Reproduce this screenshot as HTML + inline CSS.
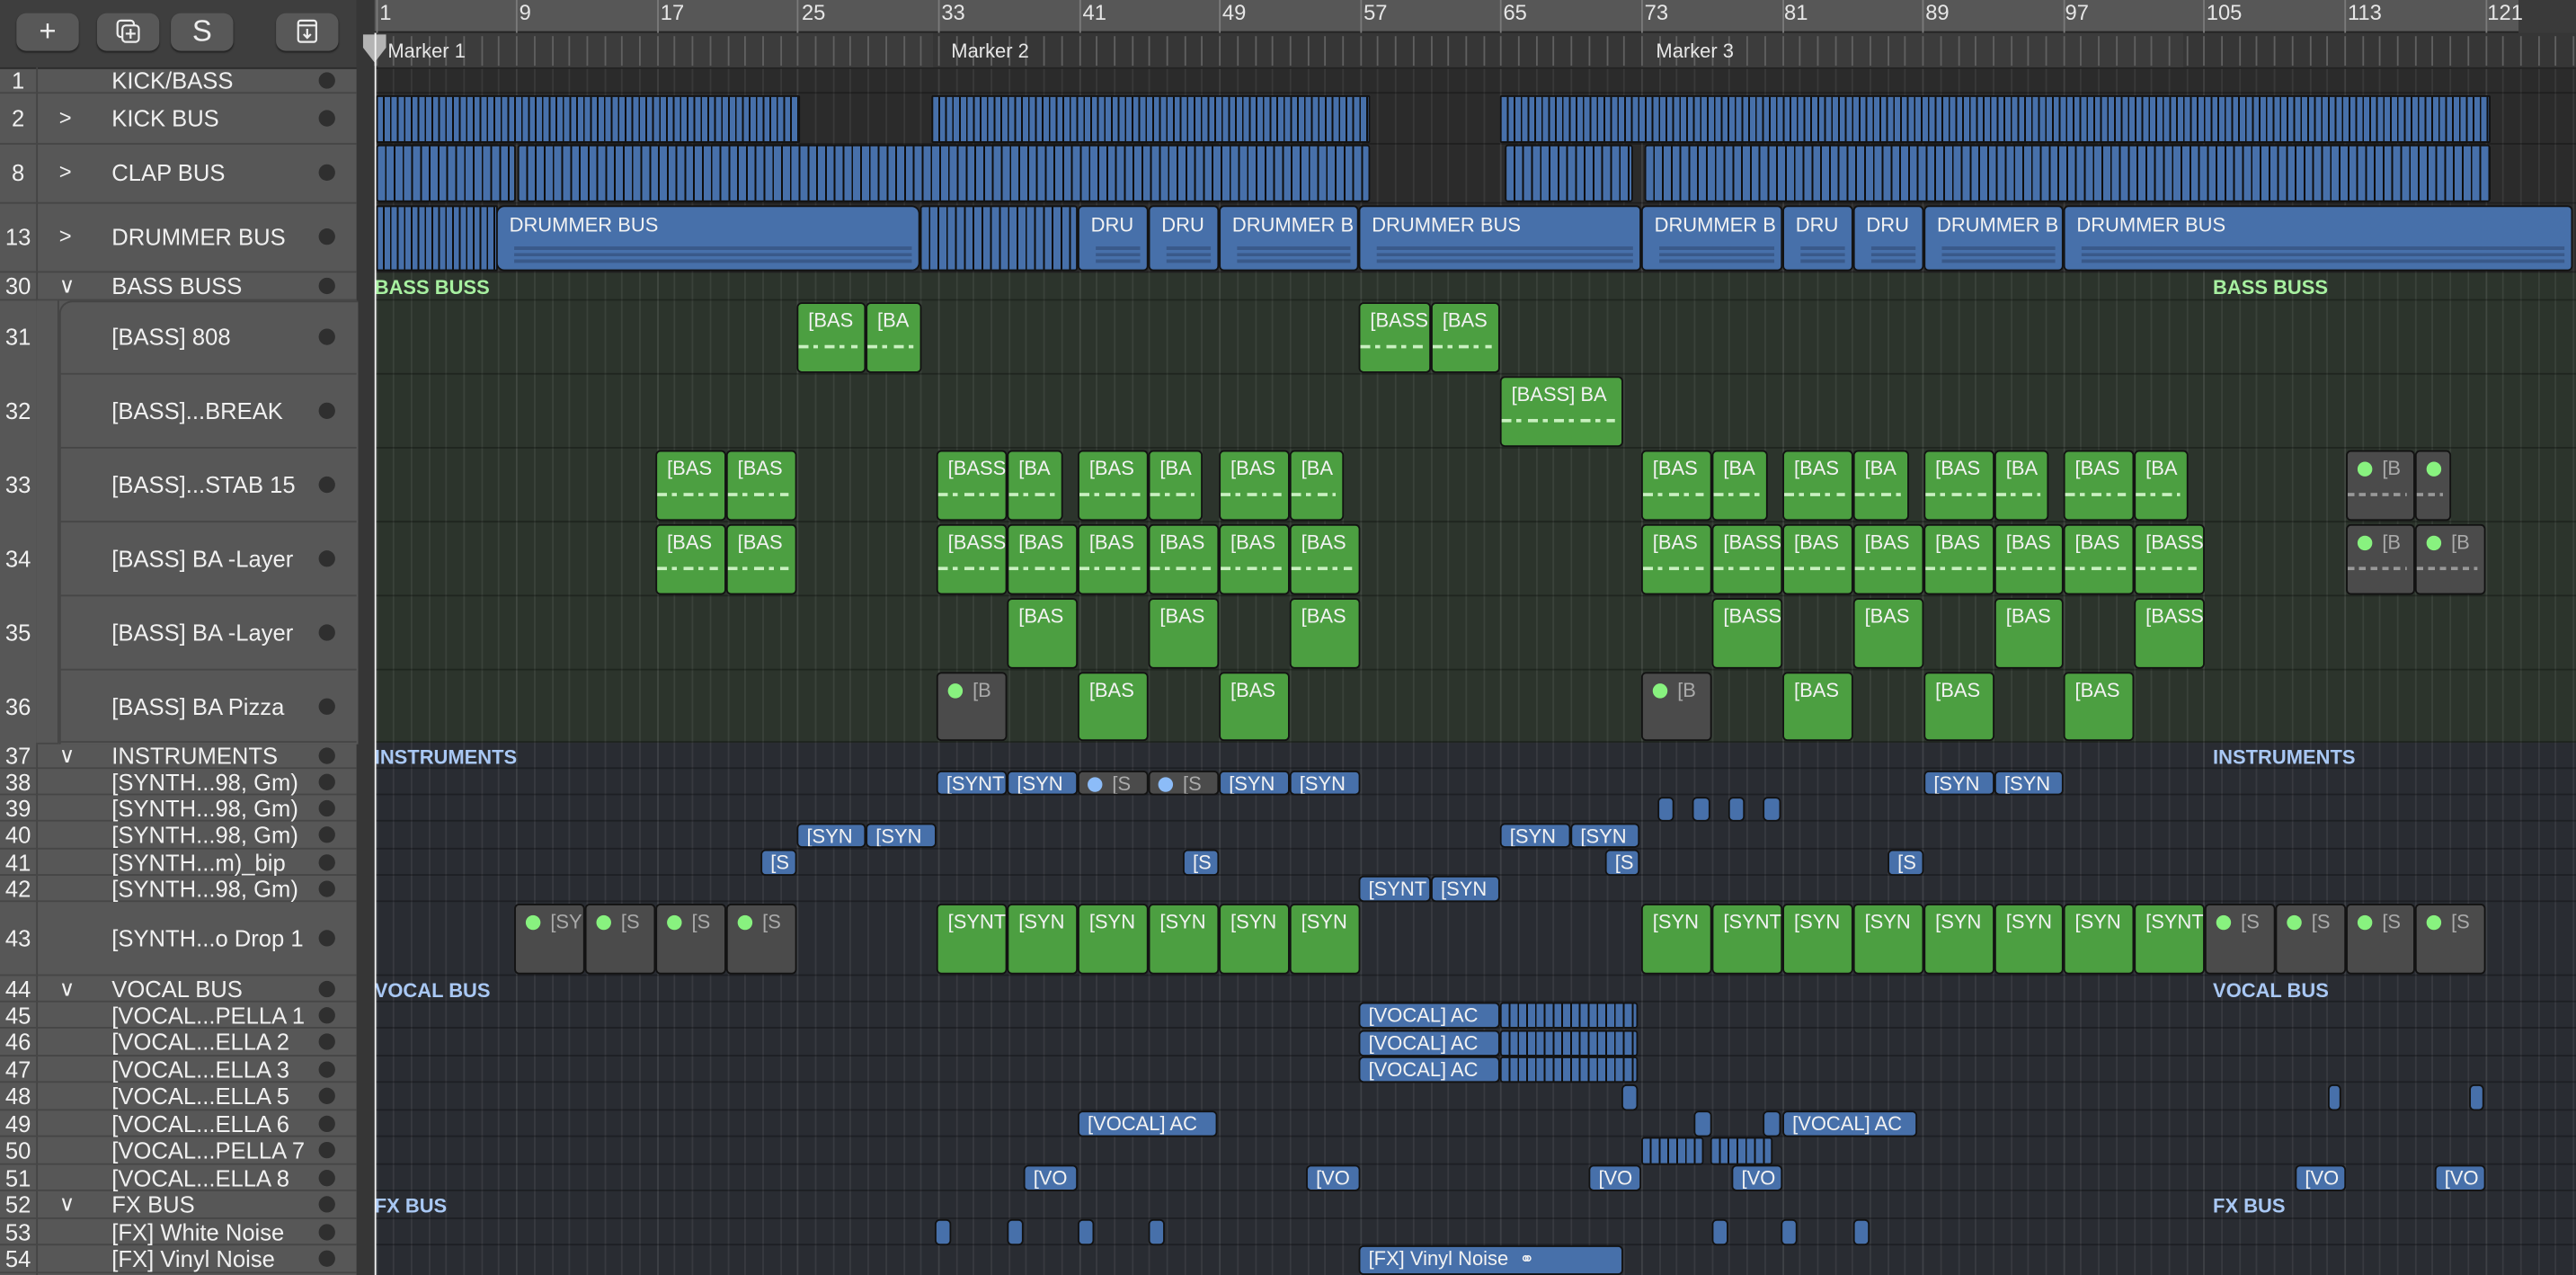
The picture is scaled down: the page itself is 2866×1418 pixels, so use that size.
<!DOCTYPE html>
<html><head><meta charset="utf-8">
<style>
html,body{margin:0;padding:0;background:#2a2a2a;overflow:hidden;width:2866px;height:1418px}
#s{position:absolute;left:0;top:0;width:1568px;height:776px;transform:scale(1.82781,1.82732);transform-origin:0 0;font-family:"Liberation Sans",sans-serif;background:#2a2a2a;overflow:hidden}
.a{position:absolute}
.R{position:absolute;border:1px solid #121212;border-radius:3px;box-sizing:border-box;overflow:hidden;color:#f2f2f2;font-size:12px;line-height:13px;padding:1px 0 0 5px;white-space:nowrap}
.b{background:#4770aa}
.g{background:#4c9f41}
.k{background:#4b4b4b;color:#aaa}
.st{background:repeating-linear-gradient(90deg,#4770aa 0 3.2px,#0e0e0e 3.2px 4.2px);border-radius:1px}
.st2{background:repeating-linear-gradient(90deg,#4770aa 0 4.3px,#0e0e0e 4.3px 5.35px);border-radius:2px}
.big{padding:5px 0 0 7px}
.mid{padding:4px 0 0 6px}
.dot{display:inline-block;width:9px;height:9px;border-radius:50%;background:#88f27f;margin-right:6px;vertical-align:-1px}
.bd{background:#8cbcf8}
.n::after{content:"";position:absolute;left:0;right:4px;top:60%;height:2px;background:repeating-linear-gradient(90deg,#c9f0c0 0 6px,transparent 6px 9px,#c9f0c0 9px 12px,transparent 12px 16px)}
.kn::after{content:"";position:absolute;left:0;right:4px;top:62%;height:2px;background:repeating-linear-gradient(90deg,#999 0 4px,transparent 4px 7px)}
.dr::after{content:"";position:absolute;left:10px;right:4px;top:62%;height:10px;background:repeating-linear-gradient(180deg,#39598a 0 2px,transparent 2px 4px)}
.lab{position:absolute;font-weight:bold;font-size:12px;line-height:14px}
.hr{position:absolute;left:0;width:217px;border-bottom:1px solid #464646;box-sizing:border-box;color:#f0f0f0;font-size:14px}
.hr .nm{position:absolute;left:0;width:22px;text-align:center}
.hr .t{position:absolute;left:68px}
.hr .c{position:absolute;left:36px;font-size:13px}
.hr .d{position:absolute;left:194px;width:10px;height:10px;border-radius:50%;background:#2f2f2f}
.btn{position:absolute;top:8px;height:23px;width:38px;border-radius:6px;background:#585858;box-shadow:0 1px 1px #222;color:#eee;text-align:center;font-size:18px;line-height:23px}
.bar{position:absolute;top:0;font-size:13px;color:#e6e6e6;line-height:16px}
</style></head><body><div id="s">

<!-- header panel -->
<div class="a" style="left:0;top:0;width:218px;height:776px;background:#575757"></div>
<div class="a" style="left:0;top:0;width:218px;height:41px;background:#3e3e3e;border-bottom:1px solid #2c2c2c"></div>
<div class="a" style="left:22px;top:41px;width:1px;height:735px;background:#444"></div>
<div class="a" style="left:217px;top:0;width:11px;height:776px;background:#363636"></div>
<div class="btn" style="left:10px">+</div>
<div class="btn" style="left:59px"><svg width="38" height="23" viewBox="0 0 38 23"><rect x="12.5" y="4.5" width="10" height="10" rx="2" fill="none" stroke="#eee" stroke-width="1.2"/><rect x="15.5" y="7.5" width="10" height="10" rx="2" fill="#585858" stroke="#eee" stroke-width="1.2"/><path d="M20.5 9.5v6M17.5 12.5h6" stroke="#eee" stroke-width="1.2"/></svg></div>
<div class="btn" style="left:104px">S</div>
<div class="btn" style="left:168px"><svg width="38" height="23" viewBox="0 0 38 23"><rect x="13.5" y="4.5" width="11" height="13" rx="1.5" fill="none" stroke="#eee" stroke-width="1.2"/><path d="M13.5 7.5h11M19 9.5v5.5M16.8 12.8l2.2 2.2 2.2-2.2" stroke="#eee" stroke-width="1.2" fill="none"/></svg></div>

<!-- track header rows -->
<div class="a" style="left:36px;top:183px;width:181px;height:269px;background:#575757;border-left:1px solid #444;border-radius:8px 0 0 0;border-top:1px solid #444"></div>
<div class="hr" style="top:42px;height:15px"><span class="nm" style="top:-1px">1</span><span class="t" style="top:-1px">KICK/BASS</span><span class="d" style="top:2px"></span></div>
<div class="hr" style="top:57px;height:31px"><span class="nm" style="top:7px">2</span><span class="c" style="top:7px">&gt;</span><span class="t" style="top:7px">KICK BUS</span><span class="d" style="top:10px"></span></div>
<div class="hr" style="top:88px;height:36px"><span class="nm" style="top:9px">8</span><span class="c" style="top:9px">&gt;</span><span class="t" style="top:9px">CLAP BUS</span><span class="d" style="top:12px"></span></div>
<div class="hr" style="top:124px;height:42px"><span class="nm" style="top:12px">13</span><span class="c" style="top:12px">&gt;</span><span class="t" style="top:12px">DRUMMER BUS</span><span class="d" style="top:15px"></span></div>
<div class="hr" style="top:166px;height:17px"><span class="nm" style="top:0">30</span><span class="c" style="top:0">&#8744;</span><span class="t" style="top:0">BASS BUSS</span><span class="d" style="top:3px"></span></div>
<div class="hr" style="top:183px;height:45px;left:36px;width:181px"></div>
<div class="hr" style="top:183px;height:45px;border:0"><span class="nm" style="top:14px">31</span><span class="t" style="top:14px">[BASS] 808</span><span class="d" style="top:17px"></span></div>
<div class="hr" style="top:228px;height:45px;left:36px;width:181px"></div>
<div class="hr" style="top:228px;height:45px;border:0"><span class="nm" style="top:14px">32</span><span class="t" style="top:14px">[BASS]...BREAK</span><span class="d" style="top:17px"></span></div>
<div class="hr" style="top:273px;height:45px;left:36px;width:181px"></div>
<div class="hr" style="top:273px;height:45px;border:0"><span class="nm" style="top:14px">33</span><span class="t" style="top:14px">[BASS]...STAB 15</span><span class="d" style="top:17px"></span></div>
<div class="hr" style="top:318px;height:45px;left:36px;width:181px"></div>
<div class="hr" style="top:318px;height:45px;border:0"><span class="nm" style="top:14px">34</span><span class="t" style="top:14px">[BASS] BA -Layer</span><span class="d" style="top:17px"></span></div>
<div class="hr" style="top:363px;height:45px;left:36px;width:181px"></div>
<div class="hr" style="top:363px;height:45px;border:0"><span class="nm" style="top:14px">35</span><span class="t" style="top:14px">[BASS] BA -Layer</span><span class="d" style="top:17px"></span></div>
<div class="hr" style="top:408px;height:44px;left:36px;width:181px"></div>
<div class="hr" style="top:408px;height:44px;border:0"><span class="nm" style="top:14px">36</span><span class="t" style="top:14px">[BASS] BA Pizza</span><span class="d" style="top:17px"></span></div>
<div class="a" style="left:22px;top:183px;width:14px;height:269px;background:#575757;border-bottom:1px solid #464646"></div>
<div class="a" style="left:35px;top:183px;width:1px;height:269px;background:#444"></div>

<div class="hr" style="top:452px;height:16px"><span class="nm" style="top:0">37</span><span class="c" style="top:0">&#8744;</span><span class="t" style="top:0">INSTRUMENTS</span><span class="d" style="top:3px"></span></div>
<div class="hr" style="top:468px;height:16px"><span class="nm" style="top:0">38</span><span class="t" style="top:0">[SYNTH...98, Gm)</span><span class="d" style="top:3px"></span></div>
<div class="hr" style="top:484px;height:16px"><span class="nm" style="top:0">39</span><span class="t" style="top:0">[SYNTH...98, Gm)</span><span class="d" style="top:3px"></span></div>
<div class="hr" style="top:500px;height:17px"><span class="nm" style="top:0">40</span><span class="t" style="top:0">[SYNTH...98, Gm)</span><span class="d" style="top:3px"></span></div>
<div class="hr" style="top:517px;height:16px"><span class="nm" style="top:0">41</span><span class="t" style="top:0">[SYNTH...m)_bip</span><span class="d" style="top:3px"></span></div>
<div class="hr" style="top:533px;height:16px"><span class="nm" style="top:0">42</span><span class="t" style="top:0">[SYNTH...98, Gm)</span><span class="d" style="top:3px"></span></div>
<div class="hr" style="top:549px;height:45px"><span class="nm" style="top:14px">43</span><span class="t" style="top:14px">[SYNTH...o Drop 1</span><span class="d" style="top:17px"></span></div>
<div class="hr" style="top:594px;height:16px"><span class="nm" style="top:0">44</span><span class="c" style="top:0">&#8744;</span><span class="t" style="top:0">VOCAL BUS</span><span class="d" style="top:3px"></span></div>
<div class="hr" style="top:610px;height:16px"><span class="nm" style="top:0">45</span><span class="t" style="top:0">[VOCAL...PELLA 1</span><span class="d" style="top:3px"></span></div>
<div class="hr" style="top:626px;height:17px"><span class="nm" style="top:0">46</span><span class="t" style="top:0">[VOCAL...ELLA 2</span><span class="d" style="top:3px"></span></div>
<div class="hr" style="top:643px;height:16px"><span class="nm" style="top:0">47</span><span class="t" style="top:0">[VOCAL...ELLA 3</span><span class="d" style="top:3px"></span></div>
<div class="hr" style="top:659px;height:17px"><span class="nm" style="top:0">48</span><span class="t" style="top:0">[VOCAL...ELLA 5</span><span class="d" style="top:3px"></span></div>
<div class="hr" style="top:676px;height:16px"><span class="nm" style="top:0">49</span><span class="t" style="top:0">[VOCAL...ELLA 6</span><span class="d" style="top:3px"></span></div>
<div class="hr" style="top:692px;height:17px"><span class="nm" style="top:0">50</span><span class="t" style="top:0">[VOCAL...PELLA 7</span><span class="d" style="top:3px"></span></div>
<div class="hr" style="top:709px;height:16px"><span class="nm" style="top:0">51</span><span class="t" style="top:0">[VOCAL...ELLA 8</span><span class="d" style="top:3px"></span></div>
<div class="hr" style="top:725px;height:17px"><span class="nm" style="top:0">52</span><span class="c" style="top:0">&#8744;</span><span class="t" style="top:0">FX BUS</span><span class="d" style="top:3px"></span></div>
<div class="hr" style="top:742px;height:16px"><span class="nm" style="top:0">53</span><span class="t" style="top:0">[FX] White Noise</span><span class="d" style="top:3px"></span></div>
<div class="hr" style="top:758px;height:17px"><span class="nm" style="top:0">54</span><span class="t" style="top:0">[FX] Vinyl Noise</span><span class="d" style="top:3px"></span></div>

<!-- timeline backgrounds -->
<div class="a" style="left:228px;top:0;width:1340px;height:20px;background:#3a3a3a"></div>
<div class="a" style="left:228px;top:0;width:1305px;height:19px;background:#575757;border-bottom:1px solid #222"></div>
<div class="a" style="left:228px;top:20px;width:1340px;height:21px;background:#363636;border-bottom:1px solid #222"></div>
<div class="a" style="left:228px;top:20px;width:340px;height:21px;background:#3c3c3c"></div>
<div class="a" style="left:999px;top:20px;width:330px;height:21px;background:#3c3c3c"></div>
<div class="a" style="left:228px;top:42px;width:1340px;height:124px;background:#2b2b2b"></div>
<div class="a" style="left:228px;top:166px;width:1340px;height:286px;background:#2c342c"></div>
<div class="a" style="left:228px;top:452px;width:1340px;height:324px;background:#292c32"></div>
<div id="grid"></div>

<!-- ruler numbers -->
<div class="bar" style="left:231px">1</div><div class="bar" style="left:316px">9</div><div class="bar" style="left:402px">17</div><div class="bar" style="left:488px">25</div><div class="bar" style="left:573px">33</div><div class="bar" style="left:659px">41</div><div class="bar" style="left:744px">49</div><div class="bar" style="left:830px">57</div><div class="bar" style="left:915px">65</div><div class="bar" style="left:1001px">73</div><div class="bar" style="left:1086px">81</div><div class="bar" style="left:1172px">89</div><div class="bar" style="left:1257px">97</div><div class="bar" style="left:1343px">105</div><div class="bar" style="left:1429px">113</div><div class="bar" style="left:1514px">121</div>
<div class="a" style="left:236px;top:24px;font-size:12px;color:#e6e6e6">Marker 1</div>
<div class="a" style="left:579px;top:24px;font-size:12px;color:#e6e6e6">Marker 2</div>
<div class="a" style="left:1008px;top:24px;font-size:12px;color:#e6e6e6">Marker 3</div>

<div id="seps"></div>

<!-- section labels -->
<div class="lab" style="left:228px;top:168px;color:#a7f0a0">BASS BUSS</div>
<div class="lab" style="left:1347px;top:168px;color:#a7f0a0">BASS BUSS</div>
<div class="lab" style="left:228px;top:454px;color:#a9c8f4">INSTRUMENTS</div>
<div class="lab" style="left:1347px;top:454px;color:#a9c8f4">INSTRUMENTS</div>
<div class="lab" style="left:228px;top:596px;color:#a9c8f4">VOCAL BUS</div>
<div class="lab" style="left:1347px;top:596px;color:#a9c8f4">VOCAL BUS</div>
<div class="lab" style="left:228px;top:727px;color:#a9c8f4">FX BUS</div>
<div class="lab" style="left:1347px;top:727px;color:#a9c8f4">FX BUS</div>

<!-- row 2 kick bus -->
<div class="R st" style="left:229px;top:58px;width:258px;height:29px"></div>
<div class="R st" style="left:567px;top:58px;width:267px;height:29px"></div>
<div class="R st" style="left:913px;top:58px;width:603px;height:29px"></div>
<!-- row 8 clap -->
<div class="R st2" style="left:229px;top:88px;width:85px;height:35px"></div>
<div class="R st2" style="left:315px;top:88px;width:519px;height:35px"></div>
<div class="R st2" style="left:916px;top:88px;width:78px;height:35px"></div>
<div class="R st2" style="left:1001px;top:88px;width:515px;height:35px"></div>
<!-- row 13 drummer -->
<div class="R st" style="left:229px;top:125px;width:74px;height:40px"></div>
<div class="R b big dr" style="left:302px;top:125px;width:258px;height:40px;border-radius:5px">DRUMMER BUS</div>
<div class="R st2" style="left:560px;top:125px;width:96px;height:40px"></div>
<div class="R b big dr" style="left:656px;top:125px;width:43px;height:40px">DRU</div>
<div class="R b big dr" style="left:699px;top:125px;width:43px;height:40px">DRU</div>
<div class="R b big dr" style="left:742px;top:125px;width:85px;height:40px">DRUMMER B</div>
<div class="R b big dr" style="left:827px;top:125px;width:172px;height:40px">DRUMMER BUS</div>
<div class="R b big dr" style="left:999px;top:125px;width:86px;height:40px">DRUMMER B</div>
<div class="R b big dr" style="left:1085px;top:125px;width:43px;height:40px">DRU</div>
<div class="R b big dr" style="left:1128px;top:125px;width:43px;height:40px">DRU</div>
<div class="R b big dr" style="left:1171px;top:125px;width:85px;height:40px">DRUMMER B</div>
<div class="R b big dr" style="left:1256px;top:125px;width:310px;height:40px">DRUMMER BUS</div>

<!-- row 31 -->
<div class="R g mid n" style="left:485px;top:184px;width:42px;height:43px">[BAS</div>
<div class="R g mid n" style="left:527px;top:184px;width:34px;height:43px">[BA</div>
<div class="R g mid n" style="left:827px;top:184px;width:44px;height:43px">[BASS</div>
<div class="R g mid n" style="left:871px;top:184px;width:42px;height:43px">[BAS</div>
<!-- row 32 -->
<div class="R g mid n" style="left:913px;top:229px;width:75px;height:43px">[BASS] BA</div>
<!-- row 33 -->
<div class="R g mid n" style="left:399px;top:274px;width:43px;height:43px">[BAS</div>
<div class="R g mid n" style="left:442px;top:274px;width:43px;height:43px">[BAS</div>
<div class="R g mid n" style="left:570px;top:274px;width:43px;height:43px">[BASS</div>
<div class="R g mid n" style="left:613px;top:274px;width:34px;height:43px">[BA</div>
<div class="R g mid n" style="left:656px;top:274px;width:43px;height:43px">[BAS</div>
<div class="R g mid n" style="left:699px;top:274px;width:33px;height:43px">[BA</div>
<div class="R g mid n" style="left:742px;top:274px;width:43px;height:43px">[BAS</div>
<div class="R g mid n" style="left:785px;top:274px;width:33px;height:43px">[BA</div>
<div class="R g mid n" style="left:999px;top:274px;width:43px;height:43px">[BAS</div>
<div class="R g mid n" style="left:1042px;top:274px;width:34px;height:43px">[BA</div>
<div class="R g mid n" style="left:1085px;top:274px;width:43px;height:43px">[BAS</div>
<div class="R g mid n" style="left:1128px;top:274px;width:34px;height:43px">[BA</div>
<div class="R g mid n" style="left:1171px;top:274px;width:43px;height:43px">[BAS</div>
<div class="R g mid n" style="left:1214px;top:274px;width:33px;height:43px">[BA</div>
<div class="R g mid n" style="left:1256px;top:274px;width:43px;height:43px">[BAS</div>
<div class="R g mid n" style="left:1299px;top:274px;width:33px;height:43px">[BA</div>
<div class="R k mid kn" style="left:1428px;top:274px;width:42px;height:43px"><span class="dot"></span>[B</div>
<div class="R k mid kn" style="left:1470px;top:274px;width:22px;height:43px"><span class="dot"></span></div>
<!-- row 34 -->
<div class="R g mid n" style="left:399px;top:319px;width:43px;height:43px">[BAS</div>
<div class="R g mid n" style="left:442px;top:319px;width:43px;height:43px">[BAS</div>
<div class="R g mid n" style="left:570px;top:319px;width:43px;height:43px">[BASS</div>
<div class="R g mid n" style="left:613px;top:319px;width:43px;height:43px">[BAS</div>
<div class="R g mid n" style="left:656px;top:319px;width:43px;height:43px">[BAS</div>
<div class="R g mid n" style="left:699px;top:319px;width:43px;height:43px">[BAS</div>
<div class="R g mid n" style="left:742px;top:319px;width:43px;height:43px">[BAS</div>
<div class="R g mid n" style="left:785px;top:319px;width:43px;height:43px">[BAS</div>
<div class="R g mid n" style="left:999px;top:319px;width:43px;height:43px">[BAS</div>
<div class="R g mid n" style="left:1042px;top:319px;width:43px;height:43px">[BASS</div>
<div class="R g mid n" style="left:1085px;top:319px;width:43px;height:43px">[BAS</div>
<div class="R g mid n" style="left:1128px;top:319px;width:43px;height:43px">[BAS</div>
<div class="R g mid n" style="left:1171px;top:319px;width:43px;height:43px">[BAS</div>
<div class="R g mid n" style="left:1214px;top:319px;width:42px;height:43px">[BAS</div>
<div class="R g mid n" style="left:1256px;top:319px;width:43px;height:43px">[BAS</div>
<div class="R g mid n" style="left:1299px;top:319px;width:43px;height:43px">[BASS</div>
<div class="R k mid kn" style="left:1428px;top:319px;width:42px;height:43px"><span class="dot"></span>[B</div>
<div class="R k mid kn" style="left:1470px;top:319px;width:43px;height:43px"><span class="dot"></span>[B</div>
<!-- row 35 -->
<div class="R g mid" style="left:613px;top:364px;width:43px;height:43px">[BAS</div>
<div class="R g mid" style="left:699px;top:364px;width:43px;height:43px">[BAS</div>
<div class="R g mid" style="left:785px;top:364px;width:43px;height:43px">[BAS</div>
<div class="R g mid" style="left:1042px;top:364px;width:43px;height:43px">[BASS</div>
<div class="R g mid" style="left:1128px;top:364px;width:43px;height:43px">[BAS</div>
<div class="R g mid" style="left:1214px;top:364px;width:42px;height:43px">[BAS</div>
<div class="R g mid" style="left:1299px;top:364px;width:43px;height:43px">[BASS</div>
<!-- row 36 -->
<div class="R k mid" style="left:570px;top:409px;width:43px;height:42px"><span class="dot"></span>[B</div>
<div class="R g mid" style="left:656px;top:409px;width:43px;height:42px">[BAS</div>
<div class="R g mid" style="left:742px;top:409px;width:43px;height:42px">[BAS</div>
<div class="R k mid" style="left:999px;top:409px;width:43px;height:42px"><span class="dot"></span>[B</div>
<div class="R g mid" style="left:1085px;top:409px;width:43px;height:42px">[BAS</div>
<div class="R g mid" style="left:1171px;top:409px;width:43px;height:42px">[BAS</div>
<div class="R g mid" style="left:1256px;top:409px;width:43px;height:42px">[BAS</div>

<!-- row 38 -->
<div class="R b" style="left:570px;top:469px;width:43px;height:15px">[SYNT</div>
<div class="R b" style="left:613px;top:469px;width:43px;height:15px">[SYN</div>
<div class="R k" style="left:656px;top:469px;width:43px;height:15px"><span class="dot bd"></span>[S</div>
<div class="R k" style="left:699px;top:469px;width:43px;height:15px"><span class="dot bd"></span>[S</div>
<div class="R b" style="left:742px;top:469px;width:43px;height:15px">[SYN</div>
<div class="R b" style="left:785px;top:469px;width:43px;height:15px">[SYN</div>
<div class="R b" style="left:1171px;top:469px;width:43px;height:15px">[SYN</div>
<div class="R b" style="left:1214px;top:469px;width:42px;height:15px">[SYN</div>
<!-- row 39 -->
<div class="R b" style="left:1009px;top:485px;width:10px;height:15px;padding:0"></div>
<div class="R b" style="left:1030px;top:485px;width:11px;height:15px;padding:0"></div>
<div class="R b" style="left:1052px;top:485px;width:10px;height:15px;padding:0"></div>
<div class="R b" style="left:1073px;top:485px;width:11px;height:15px;padding:0"></div>
<!-- row 40 -->
<div class="R b" style="left:485px;top:501px;width:42px;height:15px">[SYN</div>
<div class="R b" style="left:527px;top:501px;width:43px;height:15px">[SYN</div>
<div class="R b" style="left:913px;top:501px;width:43px;height:15px">[SYN</div>
<div class="R b" style="left:956px;top:501px;width:42px;height:15px">[SYN</div>
<!-- row 41 -->
<div class="R b" style="left:463px;top:517px;width:22px;height:16px">[S</div>
<div class="R b" style="left:720px;top:517px;width:22px;height:16px">[S</div>
<div class="R b" style="left:977px;top:517px;width:21px;height:16px">[S</div>
<div class="R b" style="left:1149px;top:517px;width:22px;height:16px">[S</div>
<!-- row 42 -->
<div class="R b" style="left:827px;top:533px;width:44px;height:16px">[SYNT</div>
<div class="R b" style="left:871px;top:533px;width:42px;height:16px">[SYN</div>
<!-- row 43 -->
<div class="R k mid" style="left:313px;top:550px;width:43px;height:43px"><span class="dot"></span>[SY</div>
<div class="R k mid" style="left:356px;top:550px;width:43px;height:43px"><span class="dot"></span>[S</div>
<div class="R k mid" style="left:399px;top:550px;width:43px;height:43px"><span class="dot"></span>[S</div>
<div class="R k mid" style="left:442px;top:550px;width:43px;height:43px"><span class="dot"></span>[S</div>
<div class="R g mid" style="left:570px;top:550px;width:43px;height:43px">[SYNT</div>
<div class="R g mid" style="left:613px;top:550px;width:43px;height:43px">[SYN</div>
<div class="R g mid" style="left:656px;top:550px;width:43px;height:43px">[SYN</div>
<div class="R g mid" style="left:699px;top:550px;width:43px;height:43px">[SYN</div>
<div class="R g mid" style="left:742px;top:550px;width:43px;height:43px">[SYN</div>
<div class="R g mid" style="left:785px;top:550px;width:43px;height:43px">[SYN</div>
<div class="R g mid" style="left:999px;top:550px;width:43px;height:43px">[SYN</div>
<div class="R g mid" style="left:1042px;top:550px;width:43px;height:43px">[SYNT</div>
<div class="R g mid" style="left:1085px;top:550px;width:43px;height:43px">[SYN</div>
<div class="R g mid" style="left:1128px;top:550px;width:43px;height:43px">[SYN</div>
<div class="R g mid" style="left:1171px;top:550px;width:43px;height:43px">[SYN</div>
<div class="R g mid" style="left:1214px;top:550px;width:42px;height:43px">[SYN</div>
<div class="R g mid" style="left:1256px;top:550px;width:43px;height:43px">[SYN</div>
<div class="R g mid" style="left:1299px;top:550px;width:43px;height:43px">[SYNT</div>
<div class="R k mid" style="left:1342px;top:550px;width:43px;height:43px"><span class="dot"></span>[S</div>
<div class="R k mid" style="left:1385px;top:550px;width:43px;height:43px"><span class="dot"></span>[S</div>
<div class="R k mid" style="left:1428px;top:550px;width:42px;height:43px"><span class="dot"></span>[S</div>
<div class="R k mid" style="left:1470px;top:550px;width:43px;height:43px"><span class="dot"></span>[S</div>

<!-- vocal rows -->
<div class="R b" style="left:827px;top:610px;width:86px;height:16px">[VOCAL] AC</div>
<div class="R st2" style="left:913px;top:610px;width:84px;height:16px"></div>
<div class="R b" style="left:827px;top:627px;width:86px;height:16px">[VOCAL] AC</div>
<div class="R st2" style="left:913px;top:627px;width:84px;height:16px"></div>
<div class="R b" style="left:827px;top:643px;width:86px;height:16px">[VOCAL] AC</div>
<div class="R st2" style="left:913px;top:643px;width:84px;height:16px"></div>
<div class="R b" style="left:987px;top:660px;width:10px;height:16px;padding:0"></div>
<div class="R b" style="left:1417px;top:660px;width:8px;height:16px;padding:0"></div>
<div class="R b" style="left:1503px;top:660px;width:9px;height:16px;padding:0"></div>
<div class="R b" style="left:656px;top:676px;width:85px;height:16px">[VOCAL] AC</div>
<div class="R b" style="left:1031px;top:676px;width:11px;height:16px;padding:0"></div>
<div class="R b" style="left:1073px;top:676px;width:11px;height:16px;padding:0"></div>
<div class="R b" style="left:1085px;top:676px;width:82px;height:16px">[VOCAL] AC</div>
<div class="R st2" style="left:999px;top:692px;width:38px;height:17px"></div>
<div class="R st2" style="left:1041px;top:692px;width:38px;height:17px"></div>
<div class="R b" style="left:623px;top:709px;width:33px;height:16px">[VO</div>
<div class="R b" style="left:795px;top:709px;width:33px;height:16px">[VO</div>
<div class="R b" style="left:967px;top:709px;width:32px;height:16px">[VO</div>
<div class="R b" style="left:1054px;top:709px;width:31px;height:16px">[VO</div>
<div class="R b" style="left:1397px;top:709px;width:31px;height:16px">[VO</div>
<div class="R b" style="left:1482px;top:709px;width:31px;height:16px">[VO</div>

<!-- FX rows -->
<div class="R b" style="left:569px;top:742px;width:10px;height:16px;padding:0"></div>
<div class="R b" style="left:613px;top:742px;width:10px;height:16px;padding:0"></div>
<div class="R b" style="left:656px;top:742px;width:10px;height:16px;padding:0"></div>
<div class="R b" style="left:699px;top:742px;width:10px;height:16px;padding:0"></div>
<div class="R b" style="left:1042px;top:742px;width:10px;height:16px;padding:0"></div>
<div class="R b" style="left:1084px;top:742px;width:10px;height:16px;padding:0"></div>
<div class="R b" style="left:1128px;top:742px;width:10px;height:16px;padding:0"></div>
<div class="R b" style="left:827px;top:758px;width:161px;height:18px">[FX] Vinyl Noise &nbsp;<span style="font-size:11px">&#9901;</span></div>

<!-- playhead -->
<div class="a" style="left:227.5px;top:20px;width:1.2px;height:756px;background:#f4f4f4"></div>
<svg class="a" style="left:219px;top:20px" width="18" height="20"><path d="M2 1h14v8l-7 9-7-9z" fill="#b4b4b4"/></svg>
<div class="a" style="left:227.5px;top:20px;width:1.2px;height:20px;background:#f4f4f4"></div>

<script>
(function(){
var g=document.getElementById('grid'),h='';
for(var b=1;b<=126;b++){
 var x=228.5+(b-1)*10.7;
 if(x>1568)break;
 var big=(b-1)%8==0;
 if(big)h+='<div class="a" style="left:'+x+'px;top:0;width:1px;height:20px;background:#7a7a7a"></div>';
 h+='<div class="a" style="left:'+x+'px;top:22px;width:1px;height:18px;background:#606060"></div>';
 h+='<div class="a" style="left:'+x+'px;top:42px;width:1px;height:734px;background:rgba(255,255,255,'+(big?0.1:0.07)+')"></div>';
}
g.innerHTML=h;
var ys=[57,88,124,166,183,228,273,318,363,408,452,468,484,500,517,533,549,594,610,626,643,659,676,692,709,725,742,758];
var s='';
ys.forEach(function(y){s+='<div class="a" style="left:228px;top:'+(y-1)+'px;width:1340px;height:1px;background:rgba(0,0,0,0.28)"></div>';});
document.getElementById('seps').innerHTML=s;
})();
</script>
</div></body></html>
